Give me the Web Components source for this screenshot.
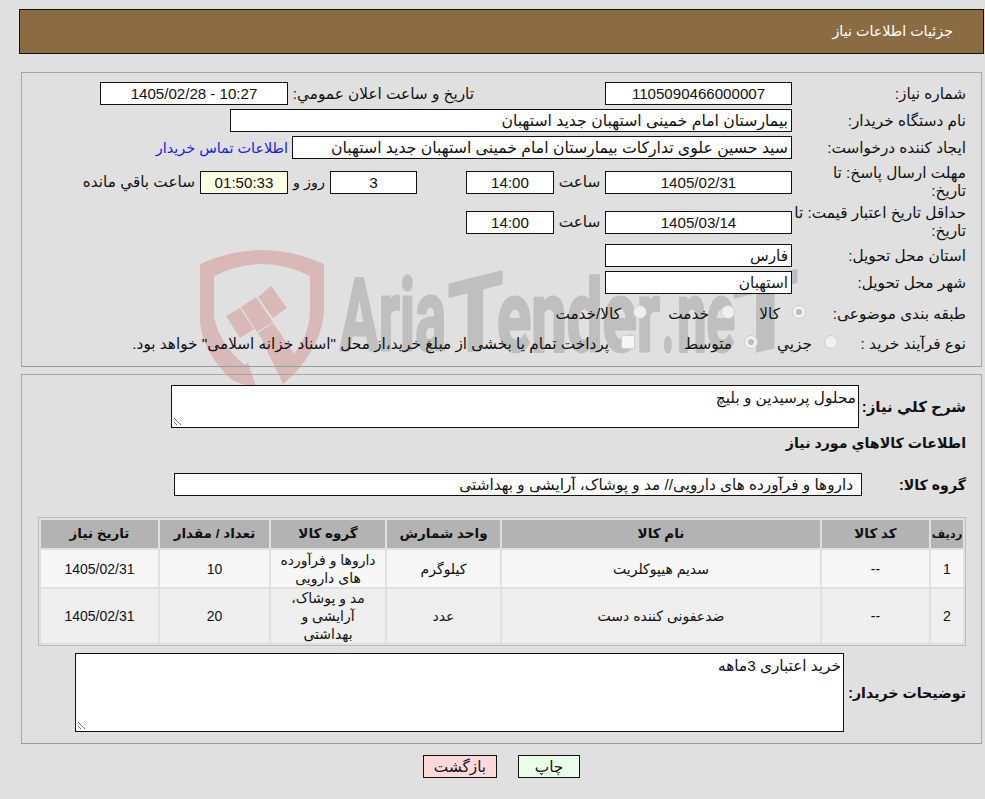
<!DOCTYPE html>
<html lang="fa" dir="rtl">
<head>
<meta charset="utf-8">
<title>جزئیات اطلاعات نیاز</title>
<style>
html, body { margin: 0; background: #e0e0e0; }
body { font: 15.3px "Liberation Sans", "DejaVu Sans", sans-serif; color: #111; }
#page { position: relative; z-index: 1; height: 799px; overflow: hidden; }
a { color: #1a1aee; text-decoration: none; font-size: 14.4px; }
text-field bdi { font-size: 15.1px; }
</style>
</head>
<body>
<water-mark></water-mark>
<div id="page">
  <page-header>جزئیات اطلاعات نیاز</page-header>

  <info-panel top="18" height="295" pad="9">
    <info-row label="شماره نیاز:">
      <text-field w="187" center><bdi dir="ltr">1105090466000007</bdi></text-field>
      <span style="width:181px;margin-right:131px;margin-left:5px;white-space:nowrap">تاریخ و ساعت اعلان عمومي:</span>
      <text-field w="188" center><bdi dir="ltr">1405/02/28 - 10:27</bdi></text-field>
    </info-row>
    <info-row label="نام دستگاه خریدار:" style="margin-top:4px">
      <text-field w="562" style="font-size:15.7px">بیمارستان امام خمینی استهبان جدید استهبان</text-field>
    </info-row>
    <info-row label="ایجاد کننده درخواست:" style="margin-top:4px">
      <text-field w="500" style="font-size:15.7px">سید حسین علوی تدارکات بیمارستان امام خمینی استهبان جدید استهبان</text-field>
      <a href="#" style="margin-right:4px;white-space:nowrap">اطلاعات تماس خریدار</a>
    </info-row>
    <info-row label="مهلت ارسال پاسخ: تا&#10;تاریخ:" tall style="margin-top:4px">
      <text-field w="187" center><bdi dir="ltr">1405/02/31</bdi></text-field>
      <span style="width:51px;text-align:center">ساعت</span>
      <text-field w="88" center><bdi dir="ltr">14:00</bdi></text-field>
      <span style="width:49px"></span>
      <text-field w="87" center>3</text-field>
      <span style="width:42px;text-align:center;font-size:14.4px">روز و</span>
      <text-field w="88" center tint="#ffffe8"><bdi dir="ltr">01:50:33</bdi></text-field>
      <span style="margin-right:5px;white-space:nowrap">ساعت باقي مانده</span>
    </info-row>
    <info-row label="حداقل تاریخ اعتبار قیمت: تا&#10;تاریخ:" tall style="margin-top:2px">
      <text-field w="187" center><bdi dir="ltr">1405/03/14</bdi></text-field>
      <span style="width:51px;text-align:center">ساعت</span>
      <text-field w="88" center><bdi dir="ltr">14:00</bdi></text-field>
    </info-row>
    <info-row label="استان محل تحویل:" style="margin-top:3px">
      <text-field w="187">فارس</text-field>
    </info-row>
    <info-row label="شهر محل تحویل:" style="margin-top:4px">
      <text-field w="187">استهبان</text-field>
    </info-row>
    <info-row label="طبقه بندی موضوعی:" style="margin-top:11px;--pull:-14px">
      <radio-opt w="71" checked>کالا</radio-opt>
      <radio-opt w="88">خدمت</radio-opt>
      <radio-opt>کالا/خدمت</radio-opt>
    </info-row>
    <info-row label="نوع فرآیند خرید :" style="margin-top:12px;--pull:-46px">
      <radio-opt w="80">جزیي</radio-opt>
      <radio-opt w="123" checked>متوسط</radio-opt>
      <radio-opt square>پرداخت تمام یا بخشی از مبلغ خرید،از محل "اسناد خزانه اسلامی" خواهد بود.</radio-opt>
    </info-row>
  </info-panel>

  <info-panel top="7" height="370" pad="10">
    <section-row label="شرح کلي نیاز:" labelw="107" size="15">
      <note-box w="688" h="43">محلول پرسیدین و بلیچ</note-box>
    </section-row>
    <div style="font-weight:bold;font-size:14.2px;padding-right:15px;margin-top:6px;line-height:18px">اطلاعات کالاهاي مورد نیاز</div>
    <section-row label="گروه کالا:" labelw="104" style="margin-top:21px">
      <text-field w="688" style="padding-right:8px">داروها و فرآورده های دارویی// مد و پوشاک، آرایشی و بهداشتی</text-field>
    </section-row>
    <goods-table></goods-table>
    <section-row label="توضیحات خریدار:" labelw="122" style="margin-top:7px">
      <note-box w="769" h="79">خرید اعتباری 3ماهه</note-box>
    </section-row>
  </info-panel>

  <div style="display:flex;gap:21px;margin:11px 405px 0 0">
    <action-button tint="#eaffea" w="62">چاپ</action-button>
    <action-button tint="#ffd9d9" w="74">بازگشت</action-button>
  </div>
</div>

<script>
const headerTemplate = document.createElement("template");
headerTemplate.innerHTML = `
<style>
:host {
    display: block;
    box-sizing: border-box;
    margin: 9px 1px 0 0;
    width: 965px;
    height: 45px;
    line-height: 43px;
    font-size: 14.3px;
    background: #8b6c42;
    border: 1px solid #111;
    color: #fff;
    padding-right: 30px;
}
</style>
<slot></slot>
`;

class PageHeader extends HTMLElement {
    constructor() {
        super();
        this.attachShadow({ mode: "open" });
        this.shadowRoot.appendChild(headerTemplate.content.cloneNode(true));
    }
}

const panelTemplate = document.createElement("template");
panelTemplate.innerHTML = `
<style>
:host {
    display: block;
    box-sizing: border-box;
    width: 961px;
    margin-right: 3px;
    border: 1px solid #a6a6a6;
    border-bottom-color: #9a9a9a;
}
</style>
<slot></slot>
`;

class InfoPanel extends HTMLElement {
    constructor() {
        super();
        this.attachShadow({ mode: "open" });
        this.shadowRoot.appendChild(panelTemplate.content.cloneNode(true));
    }
    connectedCallback() {
        this.style.marginTop = this.getAttribute("top") + "px";
        this.style.height = this.getAttribute("height") + "px";
        this.style.paddingTop = this.getAttribute("pad") + "px";
    }
}

const rowTemplate = document.createElement("template");
rowTemplate.innerHTML = `
<style>
:host {
    display: grid;
    grid-template-columns: 174px 1fr;
    align-items: center;
    padding-right: 15px;
    line-height: 18px;
}
#label { white-space: pre; }
#content { display: flex; align-items: center; margin-right: var(--pull, 0); }
</style>
<div id="label"></div>
<div id="content"><slot></slot></div>
`;

class InfoRow extends HTMLElement {
    constructor() {
        super();
        this.attachShadow({ mode: "open" });
        this.shadowRoot.appendChild(rowTemplate.content.cloneNode(true));
    }
    connectedCallback() {
        this.shadowRoot.querySelector("#label").textContent = this.getAttribute("label");
        if (this.hasAttribute("tall")) this.style.height = "38px";
    }
}

const sectionRowTemplate = document.createElement("template");
sectionRowTemplate.innerHTML = `
<style>
:host {
    display: flex;
    align-items: center;
    padding-right: 15px;
}
#label { font-weight: bold; font-size: 14.2px; white-space: nowrap; }
</style>
<div id="label"></div>
<slot></slot>
`;

class SectionRow extends HTMLElement {
    constructor() {
        super();
        this.attachShadow({ mode: "open" });
        this.shadowRoot.appendChild(sectionRowTemplate.content.cloneNode(true));
    }
    connectedCallback() {
        const label = this.shadowRoot.querySelector("#label");
        label.textContent = this.getAttribute("label");
        label.style.width = this.getAttribute("labelw") + "px";
        if (this.hasAttribute("size")) label.style.fontSize = this.getAttribute("size") + "px";
    }
}

const fieldTemplate = document.createElement("template");
fieldTemplate.innerHTML = `
<style>
:host {
    display: block;
    flex: none;
    box-sizing: border-box;
    height: 23px;
    line-height: 22px;
    background: #fff;
    border: 1px solid #111;
    padding: 0 3px;
    white-space: nowrap;
    overflow: hidden;
}
:host([center]) { text-align: center; }
</style>
<slot></slot>
`;

class TextField extends HTMLElement {
    constructor() {
        super();
        this.attachShadow({ mode: "open" });
        this.shadowRoot.appendChild(fieldTemplate.content.cloneNode(true));
    }
    connectedCallback() {
        this.style.width = this.getAttribute("w") + "px";
        if (this.hasAttribute("tint")) this.style.background = this.getAttribute("tint");
    }
}

const radioTemplate = document.createElement("template");
radioTemplate.innerHTML = `
<style>
:host {
    display: flex;
    flex: none;
    align-items: center;
    gap: 12px;
    white-space: nowrap;
}
#mark {
    flex: none;
    box-sizing: border-box;
    width: 14px;
    height: 14px;
    margin-top: -4px;
    border-radius: 50%;
    border: 1px solid #cfcfcf;
    background: #f0f0f0;
    display: flex;
    align-items: center;
    justify-content: center;
}
:host([square]) #mark { border-radius: 2px; background: #f6f6f6; }
#dot { display: none; width: 6px; height: 6px; border-radius: 50%; background: #bcbcbc; }
:host([checked]) #dot { display: block; }
</style>
<span id="mark"><span id="dot"></span></span>
<span><slot></slot></span>
`;

class RadioOpt extends HTMLElement {
    constructor() {
        super();
        this.attachShadow({ mode: "open" });
        this.shadowRoot.appendChild(radioTemplate.content.cloneNode(true));
    }
    connectedCallback() {
        if (this.hasAttribute("w")) this.style.width = this.getAttribute("w") + "px";
    }
}

const noteTemplate = document.createElement("template");
noteTemplate.innerHTML = `
<style>
:host {
    display: block;
    position: relative;
    flex: none;
    box-sizing: border-box;
    background: #fff;
    border: 1px solid #111;
    padding: 2px;
    line-height: 20px;
}
svg { position: absolute; left: 1px; bottom: 1px; }
</style>
<slot></slot>
<svg width="10" height="10" viewBox="0 0 10 10" fill="none" stroke="#777" stroke-width="1">
    <path d="M1 2 L8 9 M1 6 L4 9"/>
</svg>
`;

class NoteBox extends HTMLElement {
    constructor() {
        super();
        this.attachShadow({ mode: "open" });
        this.shadowRoot.appendChild(noteTemplate.content.cloneNode(true));
    }
    connectedCallback() {
        this.style.width = this.getAttribute("w") + "px";
        this.style.height = this.getAttribute("h") + "px";
    }
}

const tableTemplate = document.createElement("template");
tableTemplate.innerHTML = `
<style>
:host {
    display: block;
    width: 928px;
    margin: 21px 15px 0 0;
    box-sizing: border-box;
    border: 1px solid #bcbcbc;
}
table { border-collapse: separate; border-spacing: 2px; table-layout: fixed; width: 926px; }
th, td { box-sizing: border-box; padding: 0 8px; text-align: center; line-height: 18px; font-size: 14px; }
th { background: #b3b3b3; height: 28px; font-size: 13.5px; padding: 0 2px; }
th:first-child { font-size: 11.5px; padding: 0; }
tr.a td { background: #f7f7f7; height: 37px; }
tr.b td { background: #eeeeee; height: 53px; }
</style>
<table>
    <colgroup>
        <col style="width:32px"><col style="width:107px"><col style="width:318px">
        <col style="width:113px"><col style="width:114px"><col style="width:109px"><col>
    </colgroup>
    <thead>
        <tr><th>ردیف</th><th>کد کالا</th><th>نام کالا</th><th>واحد شمارش</th><th>گروه کالا</th><th>تعداد / مقدار</th><th>تاریخ نیاز</th></tr>
    </thead>
    <tbody></tbody>
</table>
`;

const goodsRows = [
    ["1", "--", "سدیم هیپوکلریت", "کیلوگرم", "داروها و فرآورده های دارویی", "10", "1405/02/31"],
    ["2", "--", "ضدعفونی کننده دست", "عدد", "مد و پوشاک، آرایشی و بهداشتی", "20", "1405/02/31"]
];

class GoodsTable extends HTMLElement {
    constructor() {
        super();
        this.attachShadow({ mode: "open" });
        this.shadowRoot.appendChild(tableTemplate.content.cloneNode(true));
    }
    connectedCallback() {
        const body = this.shadowRoot.querySelector("tbody");
        goodsRows.forEach((row, i) => {
            const tr = document.createElement("tr");
            tr.className = i % 2 ? "b" : "a";
            row.forEach(text => {
                const td = document.createElement("td");
                const bdi = document.createElement("bdi");
                bdi.textContent = text;
                td.appendChild(bdi);
                tr.appendChild(td);
            });
            body.appendChild(tr);
        });
    }
}

const buttonTemplate = document.createElement("template");
buttonTemplate.innerHTML = `
<style>
:host {
    display: block;
    box-sizing: border-box;
    height: 23px;
    line-height: 21px;
    text-align: center;
    border: 1px solid #111;
}
</style>
<slot></slot>
`;

class ActionButton extends HTMLElement {
    constructor() {
        super();
        this.attachShadow({ mode: "open" });
        this.shadowRoot.appendChild(buttonTemplate.content.cloneNode(true));
    }
    connectedCallback() {
        this.style.width = this.getAttribute("w") + "px";
        this.style.background = this.getAttribute("tint");
    }
}

const watermarkTemplate = document.createElement("template");
watermarkTemplate.innerHTML = `
<style>
:host { position: absolute; left: 0; top: 0; width: 985px; height: 799px; z-index: 0; direction: ltr; }
svg { display: block; }
text {
    font-family: Roboto, "Liberation Sans", sans-serif;
    font-weight: 700;
    font-size: 100px;
    fill: #bfbfbf;
    stroke: #bfbfbf;
    stroke-width: 3px;
    stroke-linejoin: round;
    direction: ltr;
}
</style>
<svg width="985" height="799" viewBox="0 0 985 799">
    <g fill="#d9b8b8">
        <path fill-rule="evenodd" d="M200 264 Q262 236 324 264 L324 310 Q322 345 293 375 L283 384 L262 340 L293 355 Q310 335 310 310 L310 276 Q262 252 214 276 L214 317 Q220 345 245 365 L248 362 L257 390 L232 380 Q204 355 200 323 Z"/>
        <path d="M226 316 L240 308 L254 329 L240 338 Z"/>
        <path d="M241 307 L256 297 L273 322 L257 332 Z"/>
        <path d="M258 297 L271 286 L287 308 L273 318 Z"/>
        <path d="M258 333 L273 323 L300 362 L287 378 Z"/>
    </g>
    <text x="340" y="350" textLength="106" lengthAdjust="spacingAndGlyphs">Aria</text>
    <text x="448" y="350" textLength="55" lengthAdjust="spacingAndGlyphs" transform="skewY(-14) translate(0 118)">T</text>
    <text x="497" y="351" textLength="163" lengthAdjust="spacingAndGlyphs">ender</text>
    <text x="662" y="351" textLength="12" lengthAdjust="spacingAndGlyphs">.</text>
    <text x="677" y="351" textLength="58" lengthAdjust="spacingAndGlyphs">ne</text>
    <text x="733" y="351" textLength="65" lengthAdjust="spacingAndGlyphs" transform="skewY(-14) translate(0 189)">T</text>
</svg>
`;

class WaterMark extends HTMLElement {
    constructor() {
        super();
        this.attachShadow({ mode: "open" });
        this.shadowRoot.appendChild(watermarkTemplate.content.cloneNode(true));
    }
}

customElements.define("page-header", PageHeader);
customElements.define("info-panel", InfoPanel);
customElements.define("info-row", InfoRow);
customElements.define("section-row", SectionRow);
customElements.define("text-field", TextField);
customElements.define("radio-opt", RadioOpt);
customElements.define("note-box", NoteBox);
customElements.define("goods-table", GoodsTable);
customElements.define("action-button", ActionButton);
customElements.define("water-mark", WaterMark);
</script>
</body>
</html>
